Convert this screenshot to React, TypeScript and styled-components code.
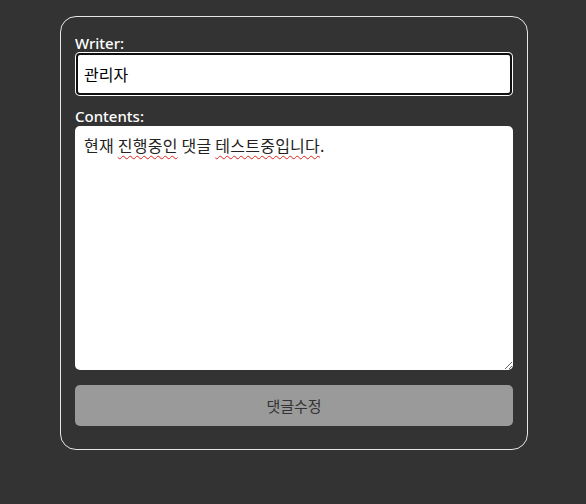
import React from "react";
import styled, { createGlobalStyle } from "styled-components";

const Global = createGlobalStyle`
  html, body { margin: 0; padding: 0; background: #333333; }
  body { font-family: "Open Sans", "Noto Sans CJK KR", sans-serif; }
  * { box-sizing: border-box; }
`;

const Page = styled.div`
  display: flex;
  padding: 16px 0 0 60px;
`;

const Card = styled.form`
  width: 468px;
  border: 1px solid #e6e6e6;
  border-radius: 16px;
  padding: 17px 14px 23px 14px;
  display: flex;
  flex-direction: column;
`;

const Label = styled.label`
  color: #ffffff;
  font-size: 15px;
  font-weight: 500;
  line-height: 18px;
  font-family: "Noto Sans", "Open Sans", sans-serif;
`;

const Input = styled.input`
  height: 44px;
  width: 100%;
  border: none;
  border-radius: 5px;
  background: #ffffff;
  padding: 0 9px;
  font-size: 16px;
  color: #000;
  font-family: "Noto Sans CJK KR", sans-serif;
  outline: none;
  box-shadow: inset 0 0 0 1px #ffffff, inset 0 0 0 3px #101010;
`;

const AreaWrap = styled.div`
  position: relative;
  margin-top: 1px;
  height: 244px;
`;

const textBox = `
  font-size: 16px;
  line-height: 22px;
  letter-spacing: 0.25px;
  padding: 8px 9px;
  font-family: "Noto Sans CJK KR", sans-serif;
`;

const Area = styled.textarea`
  ${textBox}
  display: block;
  height: 100%;
  width: 100%;
  border: none;
  border-radius: 5px;
  background: #ffffff;
  color: #222;
  outline: none;
  resize: vertical;
`;

const Spell = styled.div`
  ${textBox}
  position: absolute;
  inset: 0;
  color: transparent;
  pointer-events: none;
  white-space: pre-wrap;
`;

const Misspelt = styled.span`
  text-decoration: underline wavy #e0201a;
  text-decoration-thickness: 1px;
  text-underline-offset: 3px;
  text-decoration-skip-ink: none;
`;

const Gap = styled.div<{ $h: number }>`
  height: ${(p) => p.$h}px;
`;

const Button = styled.button`
  margin-top: 15px;
  height: 41px;
  width: 100%;
  border: none;
  border-radius: 5px;
  background: #9a9a9a;
  color: #333333;
  font-size: 15px;
  font-family: "Noto Sans CJK KR", sans-serif;
`;

export default function App() {
  return (
    <>
      <Global />
      <Page>
        <Card onSubmit={(e) => e.preventDefault()}>
          <Label>Writer:</Label>
          <Input defaultValue="관리자" spellCheck={false} />
          <Gap $h={11} />
          <Label>Contents:</Label>
          <AreaWrap>
            <Area defaultValue="현재 진행중인 댓글 테스트중입니다." spellCheck={false} />
            <Spell aria-hidden>
              {"현재 "}
              <Misspelt>진행중인</Misspelt>
              {" 댓글 "}
              <Misspelt>테스트중입니다</Misspelt>
              {"."}
            </Spell>
          </AreaWrap>
          <Button type="button">댓글수정</Button>
        </Card>
      </Page>
    </>
  );
}
